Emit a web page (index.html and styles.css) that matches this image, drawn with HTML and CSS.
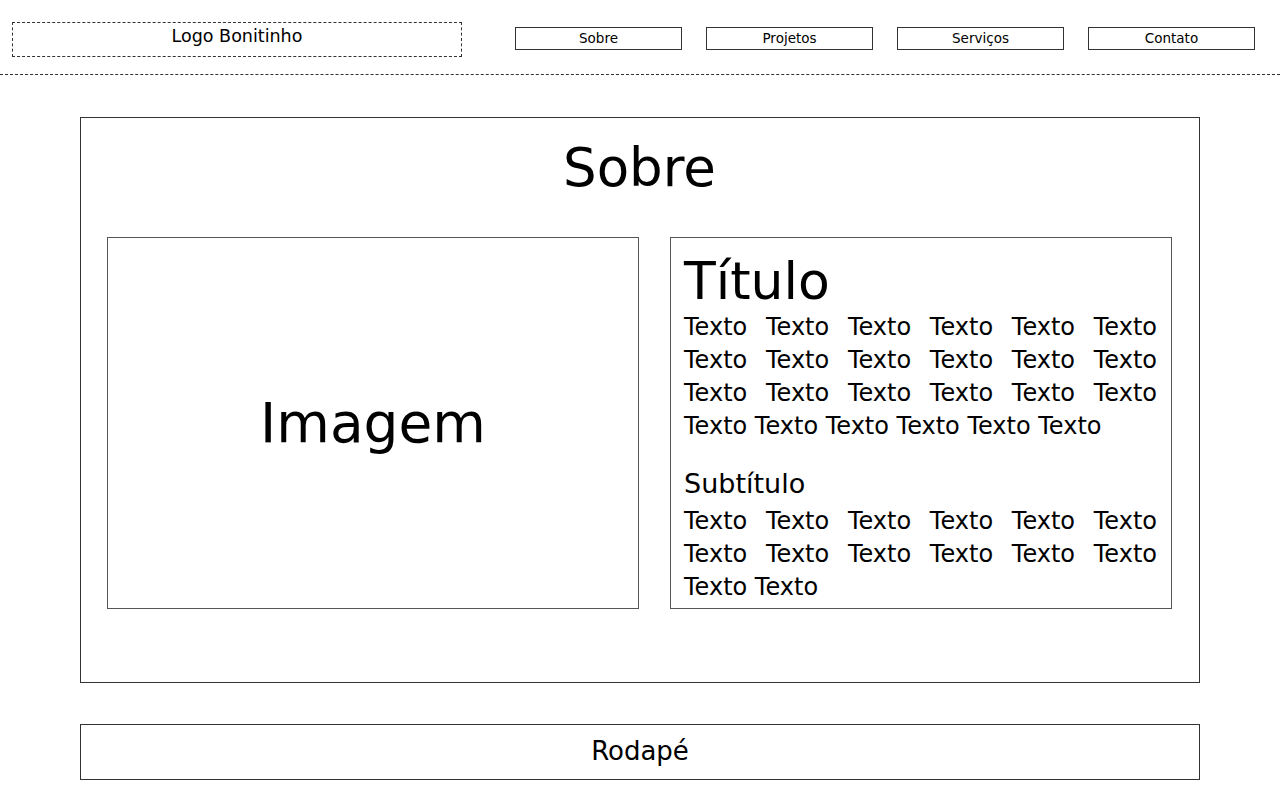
FILE: index.html
```html
<!DOCTYPE html>
<html lang="pt-BR">
<head>
    <meta charset="UTF-8">
    <title>Sobre</title>
    <link rel="stylesheet" href="styles.css">
</head>
<body>
    <header class="topo">
        <div class="logo">Logo Bonitinho</div>
        <nav class="menu">
            <a href="#" class="botao">Sobre</a>
            <a href="#" class="botao">Projetos</a>
            <a href="#" class="botao">Serviços</a>
            <a href="#" class="botao">Contato</a>
        </nav>
    </header>

    <section class="sobre">
        <h1>Sobre</h1>
        <div class="conteudo">
            <div class="imagem">Imagem</div>
            <div class="texto">
                <h2>Título</h2>
                <p>Texto Texto Texto Texto Texto Texto Texto Texto Texto Texto Texto Texto Texto Texto Texto Texto Texto Texto Texto Texto Texto Texto Texto Texto</p>
                <h3>Subtítulo</h3>
                <p>Texto Texto Texto Texto Texto Texto Texto Texto Texto Texto Texto Texto Texto Texto</p>
            </div>
        </div>
    </section>

    <footer class="rodape">Rodapé</footer>
</body>
</html>
```

FILE: styles.css
```css
body {
    margin: 0;
    font-family: "DejaVu Sans", "Liberation Sans", sans-serif;
    color: #000;
    background-color: #fff;
}
.topo {
    height: 75px;
    border-bottom: 1px dashed #333;
    display: flex;
    align-items: flex-start;
    padding: 22px 25px 0 12px;
    box-sizing: border-box;
}
.logo {
    width: 450px;
    height: 35px;
    box-sizing: border-box;
    border: 1px dashed #333;
    text-align: center;
    font-size: 17.5px;
    line-height: 26px;
}
.menu {
    margin-left: auto;
    display: flex;
    gap: 24px;
    padding-top: 5px;
}
.botao {
    width: 167px;
    height: 23px;
    box-sizing: border-box;
    border: 1px solid #333;
    text-align: center;
    font-size: 13.5px;
    line-height: 21px;
    color: #000;
    text-decoration: none;
}
.sobre {
    margin: 42px 80px 0;
    height: 566px;
    box-sizing: border-box;
    border: 1px solid #333;
    padding: 0 27px 0 26px;
}
.sobre h1 {
    margin: 0;
    padding-top: 19px;
    font-size: 53px;
    font-weight: normal;
    line-height: 62px;
    text-align: center;
    height: 119px;
    box-sizing: border-box;
}
.conteudo {
    display: flex;
    justify-content: space-between;
    height: 372px;
}
.imagem {
    width: 532px;
    box-sizing: border-box;
    border: 1px solid #555;
    display: flex;
    align-items: center;
    justify-content: center;
    font-size: 55px;
}
.texto {
    width: 502px;
    box-sizing: border-box;
    border: 1px solid #555;
    padding: 13px 14px 0 13px;
}
.texto h2 {
    margin: 0;
    font-size: 52px;
    font-weight: normal;
    line-height: 60px;
}
.texto h3 {
    margin: 23px 0 3px;
    font-size: 27px;
    font-weight: normal;
    line-height: 36px;
}
.texto p {
    margin: 0;
    font-size: 24px;
    line-height: 33px;
    text-align: justify;
}
.rodape {
    margin: 41px 80px 0;
    height: 56px;
    box-sizing: border-box;
    border: 1px solid #333;
    text-align: center;
    font-size: 26px;
    line-height: 52px;
}
```
